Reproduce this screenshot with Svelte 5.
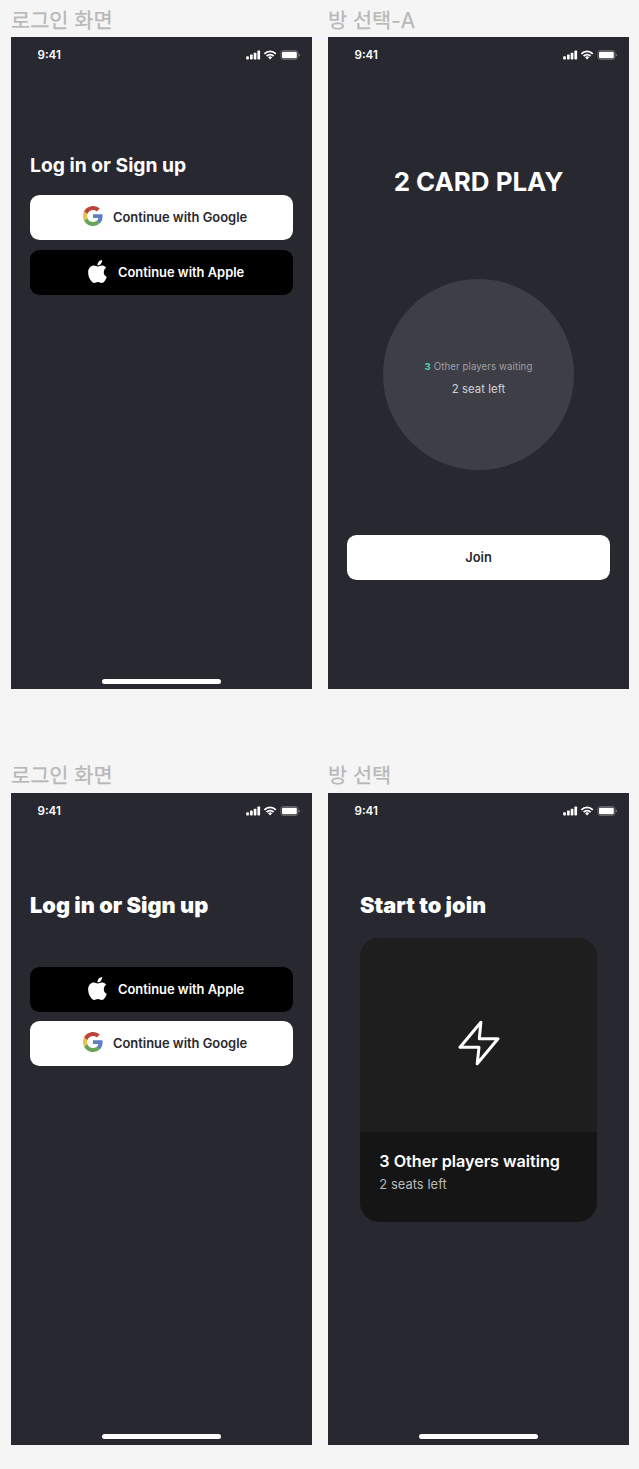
<script>
  const screens = [
    { label: '로그인 화면', kind: 'login', heading: 'Log in or Sign up', providers: ['google', 'apple'], home: true },
    { label: '방 선택-A', kind: 'lobby', home: false },
    { label: '로그인 화면', kind: 'login', heading: 'Log in or Sign up', heavy: true, providers: ['apple', 'google'], home: true },
    { label: '방 선택', kind: 'room', home: true },
  ];
</script>

{#snippet statusBar()}
  <header class="status">
    <span class="time">9:41</span>
    <svg class="indicators" width="54" height="12" viewBox="0 0 54 12">
      <g fill="#fff">
        <rect x="0.2" y="7.2" width="2.7" height="3.2" rx="0.7" />
        <rect x="4" y="5.6" width="2.7" height="4.8" rx="0.7" />
        <rect x="7.7" y="3.7" width="2.7" height="6.7" rx="0.7" />
        <rect x="11.4" y="1.6" width="2.7" height="8.8" rx="0.7" />
      </g>
      <g fill="none" stroke="#fff" stroke-width="1.9">
        <path d="M18.4 4.8a8 8 0 0 1 11.4 0" />
        <path d="M20.6 7.1a5 5 0 0 1 7 0" />
      </g>
      <path d="M22.1 8.3a2.9 2.9 0 0 1 4 0L24.1 10.5Z" fill="#fff" />
      <rect x="34.9" y="1.6" width="17" height="8.8" rx="2.3" fill="none" stroke="#fff" stroke-opacity=".38" stroke-width=".8" />
      <rect x="36" y="2.8" width="14.8" height="6.4" rx="1.2" fill="#fff" />
      <path d="M52.8 4.5v3q1.1-.5 1.1-1.5T52.8 4.5Z" fill="#fff" fill-opacity=".45" />
    </svg>
  </header>
{/snippet}

{#snippet providerButton(name)}
  {#if name === 'google'}
    <button class="btn google">
      <svg width="20" height="20" viewBox="0 0 48 48">
        <path fill="#5f7fc4" d="M46.98 24.55c0-1.57-.15-3.09-.38-4.55H24v9.02h12.94c-.58 2.96-2.26 5.48-4.78 7.18l7.73 6c4.51-4.18 7.09-10.36 7.09-17.65z" />
        <path fill="#67a558" d="M24 48c6.48 0 11.93-2.13 15.89-5.81l-7.73-6c-2.15 1.45-4.92 2.3-8.16 2.3-6.26 0-11.57-4.22-13.47-9.91l-7.98 6.19C6.51 42.62 14.62 48 24 48z" />
        <path fill="#e8c14e" d="M10.53 28.59a14.5 14.5 0 0 1 0-9.18l-7.98-6.19a24 24 0 0 0 0 21.56l7.98-6.19z" />
        <path fill="#bf4438" d="M24 9.5c3.54 0 6.71 1.22 9.21 3.6l6.85-6.85C35.9 2.38 30.47 0 24 0 14.62 0 6.51 5.38 2.56 13.22l7.98 6.19C12.43 13.72 17.74 9.5 24 9.5z" />
      </svg>
      <span>Continue with Google</span>
    </button>
  {:else}
    <button class="btn apple">
      <svg width="19" height="23" viewBox="0 0 814 1000">
        <path fill="#fff" d="M788.1 340.9c-5.8 4.5-108.2 62.2-108.2 190.5 0 148.4 130.3 200.9 134.2 202.2-.6 3.2-20.7 71.9-68.7 141.9-42.8 61.6-87.5 123.1-155.5 123.1s-85.5-39.5-164-39.5c-76.5 0-103.7 40.8-165.9 40.8s-105.6-57-155.5-127C46.7 790.7 0 663 0 541.8c0-194.4 126.4-297.5 250.8-297.5 66.1 0 121.2 43.4 162.7 43.4 39.5 0 101.1-46 176.3-46 28.5 0 130.9 2.6 198.3 99.2zm-234-181.5c31.1-36.9 53.1-88.1 53.1-139.3 0-7.1-.6-14.3-1.9-20.1-50.6 1.9-110.8 33.7-147.1 75.8-28.5 32.4-55.1 83.6-55.1 135.5 0 7.8 1.3 15.6 1.9 18.1 3.2.6 8.4 1.3 13.6 1.3 45.4 0 102.5-30.4 135.5-71.3z" />
      </svg>
      <span>Continue with Apple</span>
    </button>
  {/if}
{/snippet}

<main class="board">
  {#each screens as screen}
    <section class="frame">
      <h2 class="label">{screen.label}</h2>
      <div class="phone">
        {@render statusBar()}
        {#if screen.kind === 'login'}
          <div class="login" class:heavy={screen.heavy}>
            <h1>{screen.heading}</h1>
            <div class="providers">
              {#each screen.providers as name}
                {@render providerButton(name)}
              {/each}
            </div>
          </div>
        {:else if screen.kind === 'lobby'}
          <div class="lobby">
            <h1>2 CARD PLAY</h1>
            <div class="circle">
              <p class="waiting"><b>3</b> Other players waiting</p>
              <p class="seats">2 seat left</p>
            </div>
            <button class="btn join">Join</button>
          </div>
        {:else}
          <div class="room">
            <h1>Start to join</h1>
            <article class="card">
              <div class="cover">
                <svg width="42" height="46" viewBox="0 0 42 46" fill="none" stroke="#fff" stroke-width="3" stroke-linejoin="round">
                  <path d="M22.9 2.2 2 27.3H21L19.2 43.8 40 18.8H21.3Z" />
                </svg>
              </div>
              <div class="info">
                <h3>3 Other players waiting</h3>
                <p>2 seats left</p>
              </div>
            </article>
          </div>
        {/if}
        {#if screen.home}<div class="home"></div>{/if}
      </div>
    </section>
  {/each}
</main>

<style>
  :global(body) { background: #f5f5f5; }
  h1, h2, h3, p { margin: 0; white-space: nowrap; }
  .board {
    box-sizing: border-box;
    width: 639px;
    height: 1469px;
    padding: 0 10px 0 11px;
    display: grid;
    grid-template-columns: 301px 301px;
    grid-template-rows: 689.2px 689.2px;
    column-gap: 16px;
    row-gap: 66.3px;
    overflow: hidden;
    font-family: Inter, "Noto Sans CJK KR", sans-serif;
    color: #fff;
  }
  .frame { display: flex; flex-direction: column; }
  .label {
    height: 37.3px;
    flex: none;
    font: 400 20.8px/42px Inter, "Noto Sans CJK KR", sans-serif;
    color: #b8b8b8;
    -webkit-text-stroke: .25px #b8b8b8;
  }
  .phone {
    flex: 1;
    min-height: 0;
    display: flex;
    flex-direction: column;
    background: #282831;
  }
  .status {
    height: 35.7px;
    flex: none;
    box-sizing: border-box;
    padding: 12px 12px 0 26.5px;
    display: flex;
    justify-content: space-between;
    align-items: flex-start;
  }
  .time { font-size: 11.6px; line-height: 12px; font-weight: 600; }
  .indicators { display: block; }
  .login { padding: 80.2px 19px 0; }
  .login h1 { font-size: 19.3px; line-height: 24px; font-weight: 700; }
  .providers { margin-top: 18.1px; display: flex; flex-direction: column; gap: 9.8px; }
  .login.heavy { padding-top: 63.5px; }
  .login.heavy h1, .room h1 { font-size: 21.75px; line-height: 27px; font-weight: 900; }
  .heavy .providers { margin-top: 47.8px; gap: 9.4px; }
  .btn {
    width: 263px;
    height: 45px;
    box-sizing: border-box;
    padding: 0;
    border: 0;
    border-radius: 9.6px;
    display: flex;
    align-items: center;
    font: 600 12.9px/16px Inter, sans-serif;
    white-space: nowrap;
  }
  .btn span { padding-top: 1px; }
  .heavy .google span { padding-top: 0; }
  .google { background: #fff; color: #282831; padding-left: 53px; gap: 10px; }
  .google svg { margin-bottom: 3px; }
  .apple { background: #000; color: #fff; padding-left: 58px; gap: 11px; }
  .apple svg { margin-bottom: 1.5px; }
  .lobby { display: flex; flex-direction: column; align-items: center; padding-top: 93.4px; }
  .lobby h1 { font-size: 25.9px; line-height: 32px; font-weight: 700; }
  .circle {
    width: 191.5px;
    height: 191.5px;
    margin-top: 80.4px;
    padding-top: 8px;
    box-sizing: border-box;
    border-radius: 50%;
    background: #3e3e46;
    display: flex;
    flex-direction: column;
    align-items: center;
    justify-content: center;
    gap: 7px;
  }
  .waiting { font-size: 9.65px; line-height: 14px; letter-spacing: .1px; color: #a0a0a4; }
  .waiting b { font-weight: 700; color: #4ecdae; }
  .seats { font-size: 11.3px; line-height: 16px; letter-spacing: .07px; color: #d4d4d6; }
  .join { margin-top: 64.7px; padding-top: 1px; background: #fff; color: #282831; justify-content: center; }
  .room { padding: 63.5px 32px 0; }
  .card { width: 237px; height: 284px; margin-top: 19px; border-radius: 19.3px; overflow: hidden; background: #151515; }
  .cover { height: 194px; background: #1e1e1e; display: flex; align-items: center; justify-content: center; }
  .cover svg { margin-top: 16px; }
  .info { padding: 19px 19.3px; }
  .info h3 { font-size: 16.15px; line-height: 20px; font-weight: 600; }
  .info p { margin-top: 5.8px; font-size: 12.9px; line-height: 16px; letter-spacing: .05px; color: #b9b9b9; }
  .home { width: 119px; height: 5px; margin: auto auto 5.3px; border-radius: 3px; background: #fff; }
</style>
